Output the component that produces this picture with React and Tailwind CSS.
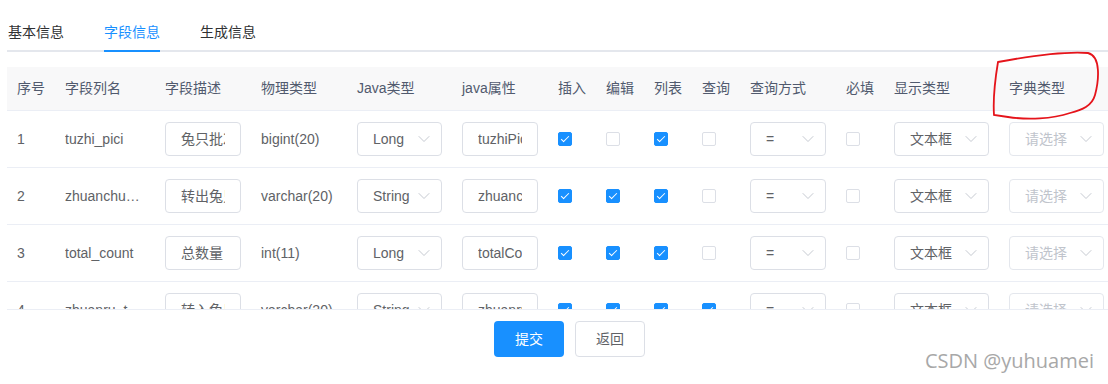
import React from "react";
import { ChevronDown } from "lucide-react";

const rows = [
  {
    id: 1,
    column: "tuzhi_pici",
    desc: "兔只批次",
    dbType: "bigint(20)",
    javaType: "Long",
    javaField: "tuzhiPici",
    checks: [true, false, true, false],
    required: false,
  },
  {
    id: 2,
    column: "zhuanchu_tuzhi",
    desc: "转出兔只",
    dbType: "varchar(20)",
    javaType: "String",
    javaField: "zhuanchuTuzhi",
    checks: [true, true, true, false],
    required: false,
  },
  {
    id: 3,
    column: "total_count",
    desc: "总数量",
    dbType: "int(11)",
    javaType: "Long",
    javaField: "totalCount",
    checks: [true, true, true, false],
    required: false,
  },
  {
    id: 4,
    column: "zhuanru_tuzhi",
    desc: "转入兔只",
    dbType: "varchar(20)",
    javaType: "String",
    javaField: "zhuanruTuzhi",
    checks: [true, true, true, true],
    required: false,
  },
];

const headers = [
  "序号",
  "字段列名",
  "字段描述",
  "物理类型",
  "Java类型",
  "java属性",
  "插入",
  "编辑",
  "列表",
  "查询",
  "查询方式",
  "必填",
  "显示类型",
  "字典类型",
];

const cols =
  "grid grid-cols-[48px_100px_96px_96px_105px_96px_48px_48px_48px_48px_96px_48px_115px_115px] w-[1107px]";

function Checkbox({ checked }) {
  return (
    <span
      className={`relative block w-[14px] h-[14px] rounded-[2px] border ${
        checked ? "bg-[#1890ff] border-[#1890ff]" : "bg-white border-[#dcdfe6]"
      }`}
    >
      {checked && (
        <span className="absolute left-[4px] top-[1px] w-[4px] h-[8px] border-r border-b border-white rotate-45"></span>
      )}
    </span>
  );
}

function TextInput({ value }) {
  return (
    <div className="w-full h-[34px] border border-[#dcdfe6] rounded-[4px] bg-white px-[15px] flex items-center">
      <span className="block flex-1 min-w-0 overflow-hidden whitespace-nowrap text-[#606266]">
        {value}
      </span>
    </div>
  );
}

function Select({ value, placeholder, light }) {
  return (
    <div
      className={`w-full h-[34px] border rounded-[4px] bg-white pl-[15px] pr-[5px] flex items-center ${
        light ? "border-[#e4e7ed]" : "border-[#dcdfe6]"
      }`}
    >
      <span
        className={`flex-1 min-w-0 overflow-hidden whitespace-nowrap ${
          value ? "text-[#606266]" : "text-[#c0c4cc]"
        }`}
      >
        {value || placeholder}
      </span>
      <span className="w-[25px] flex justify-center">
        <ChevronDown size={20} strokeWidth={1.1} color="#c0c4cc" />
      </span>
    </div>
  );
}

function Cell({ children }) {
  return <div className="px-[10px] flex items-center min-w-0">{children}</div>;
}

export default function App() {
  return (
    <div
      className="relative w-[1108px] h-[384px] bg-white overflow-hidden text-[14px]"
      style={{ fontFamily: '"Liberation Sans", Arial, "Noto Sans CJK SC", sans-serif' }}
    >
      <div className="pl-[7px] pt-[12px]">
        {/* 标签页 */}
        <div className="flex h-[40px] border-b-2 border-[#e4e7ed]">
          <div className="ml-px h-[40px] leading-[40px] text-[#303133]">基本信息</div>
          <div className="ml-[40px] h-[40px] leading-[40px] text-[#1890ff] border-b-2 border-[#1890ff]">
            字段信息
          </div>
          <div className="ml-[40px] h-[40px] leading-[40px] text-[#303133]">生成信息</div>
        </div>

        {/* 字段表格 */}
        <div className="mt-[15px] h-[243px] overflow-hidden border-b border-[#ebeef5]">
          <div className={`${cols} h-[44px] bg-[#f8f8f9] border-b border-[#ebeef5] text-[#515a6e]`}>
            {headers.map((h) => (
              <Cell key={h}>{h}</Cell>
            ))}
          </div>
          {rows.map((r) => (
            <div
              key={r.id}
              className={`${cols} h-[57px] border-b border-[#ebeef5] text-[#606266]`}
            >
              <Cell>{r.id}</Cell>
              <Cell>
                <span className="block w-full overflow-hidden text-ellipsis whitespace-nowrap">
                  {r.column}
                </span>
              </Cell>
              <Cell>
                <TextInput value={r.desc} />
              </Cell>
              <Cell>{r.dbType}</Cell>
              <Cell>
                <Select value={r.javaType} />
              </Cell>
              <Cell>
                <TextInput value={r.javaField} />
              </Cell>
              {r.checks.map((c, i) => (
                <Cell key={i}>
                  <Checkbox checked={c} />
                </Cell>
              ))}
              <Cell>
                <Select value="=" />
              </Cell>
              <Cell>
                <Checkbox checked={r.required} />
              </Cell>
              <Cell>
                <Select value="文本框" />
              </Cell>
              <Cell>
                <Select placeholder="请选择" light />
              </Cell>
            </div>
          ))}
        </div>
      </div>

      {/* 按钮 */}
      <div className="flex gap-[11px] pl-[494px] mt-[11px]">
        <button className="w-[70px] h-[36px] rounded-[4px] bg-[#1890ff] text-white">提交</button>
        <button className="w-[70px] h-[36px] rounded-[4px] border border-[#dcdfe6] bg-white text-[#606266]">
          返回
        </button>
      </div>

      {/* 水印 */}
      <div
        className="absolute right-[14px] bottom-[8px] text-[20px] text-[#a8a8a8]"
        style={{ fontFamily: '"Open Sans", "Noto Sans", sans-serif' }}
      >
        CSDN @yuhuamei
      </div>

      {/* 红圈标注 */}
      <svg className="absolute left-0 top-0 pointer-events-none" width="1108" height="384">
        <path
          d="M 998 62 C 1025 57, 1062 51, 1088 53 C 1101 56, 1099 80, 1095 95 C 1092 106, 1082 110, 1070 113 C 1052 119, 1028 120, 1008 117 L 994 115 C 993 100, 995 80, 998 62"
          fill="none"
          stroke="#e5141b"
          strokeWidth="1.8"
          strokeLinecap="round"
        />
      </svg>
    </div>
  );
}
